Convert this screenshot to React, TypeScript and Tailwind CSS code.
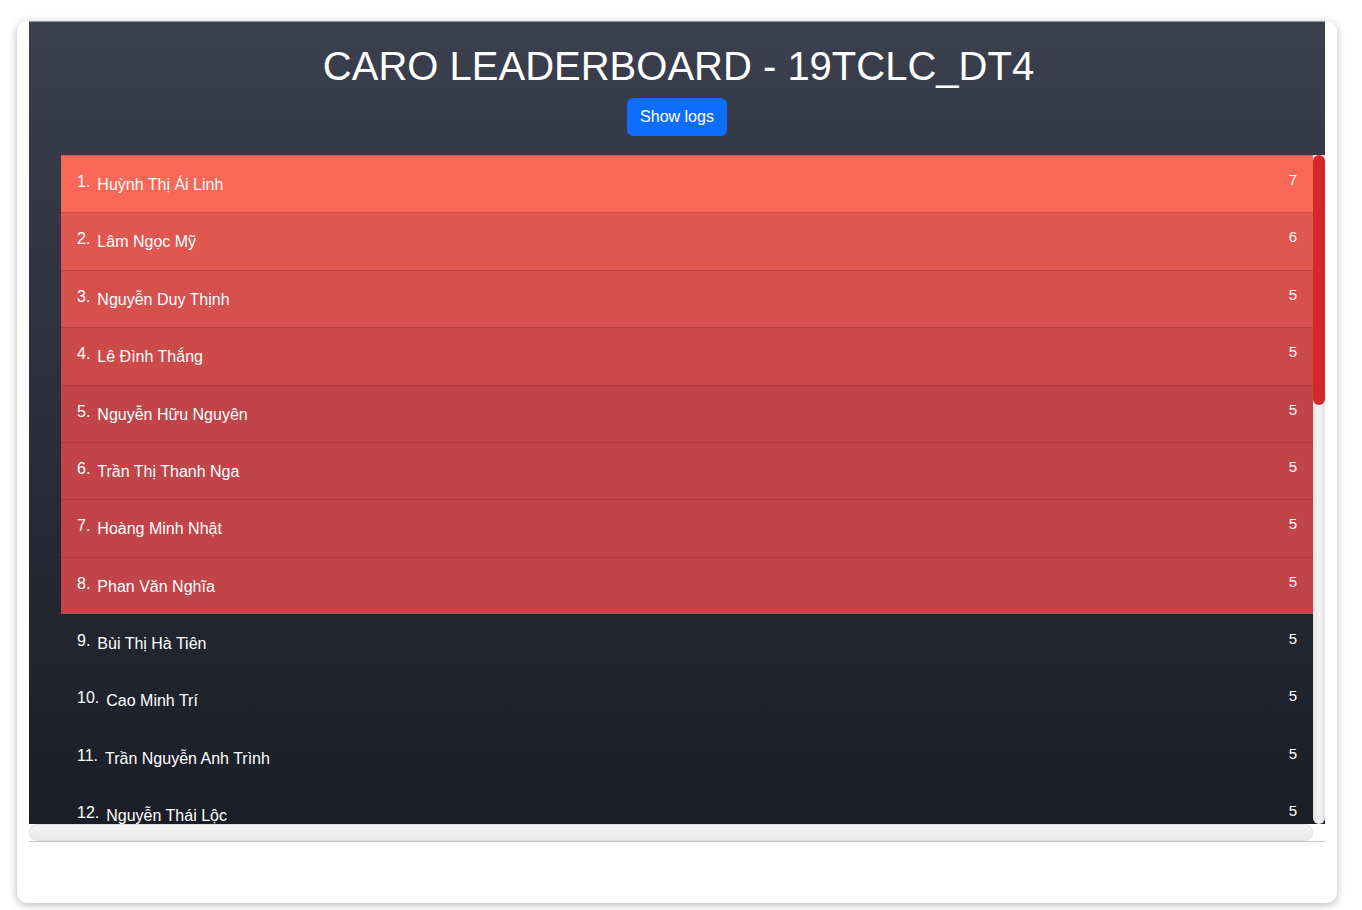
const PLAYERS = [
  { name: 'Huỳnh Thị Ái Linh', score: 7 },
  { name: 'Lâm Ngọc Mỹ', score: 6 },
  { name: 'Nguyễn Duy Thịnh', score: 5 },
  { name: 'Lê Đình Thắng', score: 5 },
  { name: 'Nguyễn Hữu Nguyên', score: 5 },
  { name: 'Trần Thị Thanh Nga', score: 5 },
  { name: 'Hoàng Minh Nhật', score: 5 },
  { name: 'Phan Văn Nghĩa', score: 5 },
  { name: 'Bùi Thị Hà Tiên', score: 5 },
  { name: 'Cao Minh Trí', score: 5 },
  { name: 'Trần Nguyễn Anh Trình', score: 5 },
  { name: 'Nguyễn Thái Lộc', score: 5 },
]

// top 8 get highlighted, fading from coral to deep red
const ROW_BG = [
  'bg-[#f96756] border-[#d9584b]',
  'bg-[#e0574f] border-[#c94e48]',
  'bg-[#d6514d] border-[#bd4645]',
  'bg-[#cc4b4a] border-[#b34243]',
  'bg-[#c14448] border-[#a83c40]',
  'bg-[#c14448] border-[#a83c40]',
  'bg-[#c14448] border-[#a83c40]',
  'bg-[#c14448] border-[#a83c40]',
]

const Row = ({ rank, name, score }: { rank: number; name: string; score: number }) => {
  const bg = ROW_BG[rank - 1] ?? 'border-transparent'
  return (
    <li className={`flex h-[57.375px] shrink-0 items-start justify-between border-t px-4 pt-[17px] text-white ${bg}`}>
      <div className="flex items-start">
        <span className="text-[16px] leading-[18px]">{rank}.</span>
        <span className="ml-[7px] text-[16px] leading-6">{name}</span>
      </div>
      <span className="-mt-[1px] text-[15px] leading-[16px]">{score}</span>
    </li>
  )
}

const App = () => {
  return (
    <div className="min-h-[910px] bg-white pt-[21px] font-['Liberation_Sans',Arial,sans-serif]">
      <div className="ml-[17px] flex h-[882px] w-[1320px] flex-col rounded-[10px] bg-white px-[12px] shadow-[0_2px_8px_rgba(0,0,0,0.28)]">
        <div className="flex h-[803px] flex-col border-t border-[#8f939b] bg-linear-to-b from-[#3b3f4e] to-[#1b1e28]">
          <div className="flex h-[133px] flex-col items-center pt-[20px]">
            <h1 className="mb-2 pl-[3px] text-[40px] leading-[48px] text-white">CARO LEADERBOARD - 19TCLC_DT4</h1>
            <button className="h-[38px] rounded-md border border-[#0d6efd] bg-[#0d6efd] px-3 text-[16px] leading-6 text-white">
              Show logs
            </button>
          </div>
          <div className="flex min-h-0 flex-1 pl-[32px]">
            <ul className="flex flex-1 flex-col overflow-hidden">
              {PLAYERS.map((p, i) => (
                <Row key={p.name} rank={i + 1} name={p.name} score={p.score} />
              ))}
            </ul>
            <div className="flex w-[12px] flex-col rounded-b-full bg-linear-to-r from-[#e2e2e2] via-[#f4f4f4] to-[#e2e2e2]">
              <div className="h-[250px] rounded-full bg-[#d3292a]" />
            </div>
          </div>
        </div>
        <div className="flex h-[18px] border-b border-[#c8c8c8]">
          <div className="flex-1 rounded-full border border-[#dcdcdc] bg-linear-to-b from-[#f6f6f6] to-[#e8e8e8]" />
          <div className="w-[12px]" />
        </div>
      </div>
    </div>
  )
}

export default App
